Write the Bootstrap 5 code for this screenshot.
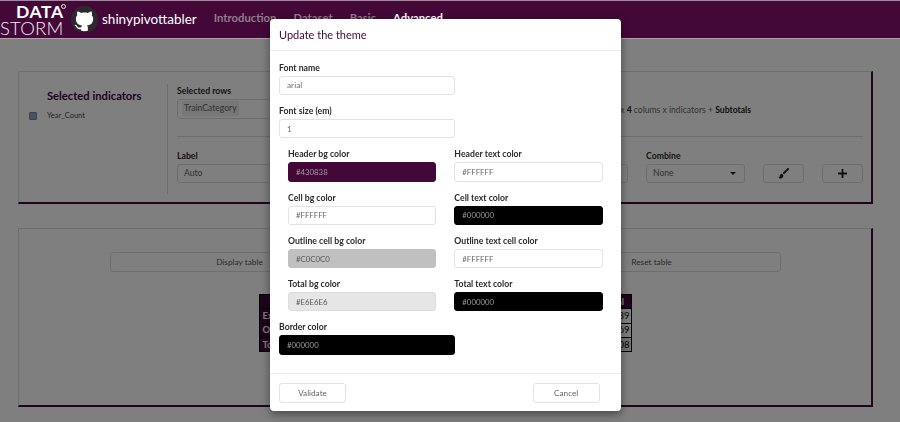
<!DOCTYPE html>
<html lang="en">
<head>
<meta charset="utf-8">
<title>shinypivottabler</title>
<link href="https://cdn.jsdelivr.net/npm/bootstrap@5.3.0/dist/css/bootstrap.min.css" rel="stylesheet">
<style>
html,body{height:422px;overflow:hidden}
body{font-family:Lato,"Open Sans",sans-serif;font-size:8.5px;color:#212529;background:#fff}
.topbar{height:39px;background:#430838;border-top:1px solid #9c8b99;border-bottom:1px solid #b49fb0;z-index:1052;padding:0}
.logo-box{width:68px;height:37px;color:#fff;line-height:1}
.logo-data{position:absolute;left:16px;top:4px;font-size:17.5px;line-height:14px;font-weight:700;letter-spacing:.6px;color:#fff}
.logo-storm{position:absolute;left:0;top:20px;font-size:18.5px;line-height:14px;font-weight:300;letter-spacing:.2px;color:#f2eef1}
.logo-ring{position:absolute;left:61px;top:3px;width:5px;height:5px;border:1px solid #e6dde4;border-radius:50%}
.gh-mark{margin-left:3px}
.brand-name{font-size:13.5px;color:#fff;margin-left:4px;line-height:1}
.top-links{margin-left:17px;gap:17px;font-size:11.3px;font-weight:700;color:#8f7d8b;margin-top:-2px}
.top-links a{color:inherit;text-decoration:none}
.top-links a.on{color:#fff}
.sheet{padding:32px 27px 0 18px}
.pane{background:#fff;border:1px solid #dcdcdc;border-right:2px solid #430838;border-bottom:2px solid #430838}
.pane-a{height:133px;margin-bottom:24px}
.pane-b{height:179px}
.ind-col{width:149px;height:110px;margin-top:12px;border-right:1px solid #d8d8d8;padding:5px 0 0 10px}
.ind-title{font-size:11.2px;font-weight:700;color:#430838;margin:0 0 6px 18px;line-height:14px}
.ind-check{width:8px;height:8px;background:#90a4c0;border:1px solid #6f88ab;border-radius:1px;display:inline-block;margin-right:10px;position:relative;top:.5px}
.ind-row{font-size:7.5px;color:#444;display:flex;align-items:center;margin-top:7px}
.opt-col{margin-left:9px;width:686px;margin-top:11px}
.fld-label{font-size:8.7px;font-weight:700;line-height:16px;display:block;margin-bottom:0;color:#2b2b2b}
.fake-in{height:19.5px;border:1px solid #ddd;border-radius:3px;padding:0 6px;display:flex;align-items:center;color:#666;background:#fff;font-size:8.6px}
.chip{background:#eee;border-radius:2px;padding:1px 2px;color:#666;margin-left:-2px}
.sum-text{font-size:8.6px;color:#666;padding-top:21px;margin-left:auto;margin-right:112px;white-space:nowrap}
.sum-text b{color:#222}
.divider{border-top:1px solid #ddd;margin:17px 0 11px}
.caret{width:0;height:0;border-left:3.5px solid transparent;border-right:3.5px solid transparent;border-top:3.5px solid #222;margin-left:auto;margin-right:2px}
.tool-btn{width:41px;height:19.5px;padding:0;border:1px solid #ddd;border-radius:3px;background:#fff;margin-top:16px;display:flex;align-items:center;justify-content:center;--bs-btn-hover-bg:#fff}
.act-row{padding:23px 90px 0 91px}
.act-btn{width:259px;height:20px;padding:0;font-size:8.3px;color:#555;background:#fff;border:1px solid #ddd;border-radius:3px}
.pivot{width:373px;margin:22px auto 0;border-collapse:collapse;font-size:9.5px;table-layout:fixed}
.pivot th,.pivot td{border:1px solid #000;height:14.3px;padding:0 1px;line-height:1;color:#000;background:#fff;white-space:nowrap}
.pivot .hd{background:#430838;color:#fff;font-weight:700;padding:0 3px}
.pivot td{text-align:right}
.pivot tr.sumrow td{background:#e6e6e6}
.theme-dialog{width:350.7px;max-width:none;margin:18.5px 0 0 270px}
.theme-box{border:0;border-radius:4px;height:392px;box-shadow:0 3px 10px rgba(0,0,0,.45);font-size:8.7px}
.theme-head{height:32.5px;padding:1px 9px 0;border-bottom:1px solid #eee;display:flex;align-items:center}
.theme-title{font-size:11px;font-weight:400;color:#430838;margin:0;line-height:1}
.theme-body{padding:8.7px 9px 10.7px;height:322px}
.theme-foot{height:37px;border-top:1px solid #eee;padding:9px 21px 0 9px;display:flex;justify-content:space-between;align-items:flex-start}
.half{width:175.5px}
.fieldset{margin-bottom:7.9px}
.fieldset .form-control{height:19.4px;min-height:0;padding:0 7px;font-size:8.3px;border:1px solid #e3e3e3;border-radius:3px;color:#6e6e6e;line-height:1}
.color-grid{--bs-gutter-x:18px;margin-left:0;margin-right:0}
.color-grid>div{padding-left:9px;padding-right:9px}
.fieldset .form-control.hexv{font-size:7.8px}
.form-control.sw-purple{background:#430838;color:#a997a5;border-color:#430838}
.form-control.sw-black{background:#000;color:#9a9a9a;border-color:#000}
.form-control.sw-silver{background:#c0c0c0;color:#555;border-color:#c0c0c0}
.form-control.sw-pale{background:#e6e6e6;color:#555;border-color:#ddd}
.form-control.sw-white{background:#fff;color:#666}
.foot-btn{width:67px;height:20px;padding:0;font-size:8.2px;color:#666;background:#fff;border:1px solid #e3e3e3;border-radius:3px}
</style>
</head>
<body>
<nav class="navbar topbar position-relative flex-nowrap justify-content-start align-items-center">
  <div class="logo-box position-relative flex-shrink-0">
    <span class="logo-data">DATA</span><span class="logo-storm">STORM</span><i class="logo-ring"></i>
  </div>
  <svg class="gh-mark flex-shrink-0" width="27" height="27" viewBox="0 0 16 16" role="img" aria-label="GitHub"><circle cx="8" cy="8" r="7" fill="#fff"/><path fill="#2c2a2c" d="M8 0C3.58 0 0 3.58 0 8c0 3.54 2.29 6.53 5.47 7.59.4.07.55-.17.55-.38 0-.19-.01-.82-.01-1.49-2.01.37-2.53-.49-2.69-.94-.09-.23-.48-.94-.82-1.13-.28-.15-.68-.52-.01-.53.63-.01 1.08.58 1.23.82.72 1.21 1.87.87 2.33.66.07-.52.28-.87.51-1.07-1.78-.2-3.64-.89-3.64-3.95 0-.87.31-1.59.82-2.15-.08-.2-.36-1.02.08-2.12 0 0 .67-.21 2.2.82.64-.18 1.32-.27 2-.27.68 0 1.36.09 2 .27 1.53-1.04 2.2-.82 2.2-.82.44 1.1.16 1.92.08 2.12.51.56.82 1.27.82 2.15 0 3.07-1.87 3.75-3.65 3.95.29.25.54.73.54 1.48 0 1.07-.01 1.93-.01 2.2 0 .21.15.46.55.38A8.013 8.013 0 0016 8c0-4.42-3.58-8-8-8z"/></svg>
  <span class="brand-name">shinypivottabler</span>
  <div class="top-links d-flex">
    <a href="#">Introduction</a><a href="#">Dataset</a><a href="#">Basic</a><a href="#" class="on">Advanced</a>
  </div>
</nav>

<main class="sheet">
  <section class="pane pane-a d-flex">
    <div class="ind-col flex-shrink-0">
      <p class="ind-title">Selected indicators</p>
      <div class="ind-row"><i class="ind-check"></i>Year_Count</div>
    </div>
    <div class="opt-col">
      <div class="d-flex">
        <div style="width:215px">
          <span class="fld-label">Selected rows</span>
          <div class="fake-in"><span class="chip">TrainCategory</span></div>
        </div>
        <div class="sum-text">x <b>4</b> colums x indicators + <b>Subtotals</b></div>
      </div>
      <div class="divider"></div>
      <div class="d-flex" style="gap:18px">
        <div style="width:218px"><span class="fld-label">Label</span><div class="fake-in">Auto</div></div>
        <div style="width:215px"><span class="fld-label">&nbsp;</span><div class="fake-in"></div></div>
        <div style="width:99px"><span class="fld-label">Combine</span><div class="fake-in">None<i class="caret"></i></div></div>
        <button type="button" class="btn tool-btn" aria-label="Edit theme"><svg width="11" height="11" viewBox="0 0 16 16"><path fill="#222" d="M15.6.4c-.5-.5-1.3-.5-2 0L6.8 7.2l2 2 6.8-6.8c.5-.7.5-1.5 0-2zM5.6 8.3C3.6 8.3 2.8 10 2.6 11.6 2.4 13 1.6 13.8.4 14.2c1.6 1.4 4.2 1.6 6-.1 1.4-1.3 1.6-3 1.1-4.2z"/></svg></button>
        <button type="button" class="btn tool-btn" aria-label="Add"><svg width="9" height="9" viewBox="0 0 10 10"><path fill="#222" d="M4 0h2v4h4v2H6v4H4V6H0V4h4z"/></svg></button>
      </div>
    </div>
  </section>

  <section class="pane pane-b">
    <div class="d-flex justify-content-between act-row">
      <button type="button" class="btn act-btn">Display table</button>
      <button type="button" class="btn act-btn">Reset table</button>
    </div>
    <table class="pivot">
      <colgroup><col style="width:72px"><col><col style="width:31px"></colgroup>
      <tr><th class="hd"></th><th class="hd"></th><th class="hd">Total</th></tr>
      <tr><th class="hd">Exp</th><td></td><td>39</td></tr>
      <tr><th class="hd">Ord</th><td></td><td>69</td></tr>
      <tr class="sumrow"><th class="hd">Tot</th><td></td><td>08</td></tr>
    </table>
  </section>
</main>

<div class="modal-backdrop fade show"></div>
<div class="modal fade show d-block" tabindex="-1" role="dialog" aria-modal="true">
  <div class="modal-dialog theme-dialog">
    <div class="modal-content theme-box">
      <div class="theme-head"><h4 class="theme-title">Update the theme</h4></div>
      <div class="theme-body">
        <div class="fieldset half"><label class="fld-label">Font name</label><input class="form-control" value="arial"></div>
        <div class="fieldset half"><label class="fld-label">Font size (em)</label><input class="form-control" value="1"></div>
        <div class="row color-grid">
          <div class="col-6 fieldset"><label class="fld-label">Header bg color</label><input class="form-control hexv sw-purple" value="#430838"></div>
          <div class="col-6 fieldset"><label class="fld-label">Header text color</label><input class="form-control hexv sw-white" value="#FFFFFF"></div>
          <div class="col-6 fieldset"><label class="fld-label">Cell bg color</label><input class="form-control hexv sw-white" value="#FFFFFF"></div>
          <div class="col-6 fieldset"><label class="fld-label">Cell text color</label><input class="form-control hexv sw-black" value="#000000"></div>
          <div class="col-6 fieldset"><label class="fld-label">Outline cell bg color</label><input class="form-control hexv sw-silver" value="#C0C0C0"></div>
          <div class="col-6 fieldset"><label class="fld-label">Outline text cell color</label><input class="form-control hexv sw-white" value="#FFFFFF"></div>
          <div class="col-6 fieldset"><label class="fld-label">Total bg color</label><input class="form-control hexv sw-pale" value="#E6E6E6"></div>
          <div class="col-6 fieldset"><label class="fld-label">Total text color</label><input class="form-control hexv sw-black" value="#000000"></div>
        </div>
        <div class="fieldset half"><label class="fld-label">Border color</label><input class="form-control hexv sw-black" value="#000000"></div>
      </div>
      <div class="theme-foot">
        <button type="button" class="btn foot-btn">Validate</button>
        <button type="button" class="btn foot-btn">Cancel</button>
      </div>
    </div>
  </div>
</div>
<script src="https://cdn.jsdelivr.net/npm/bootstrap@5.3.0/dist/js/bootstrap.bundle.min.js"></script>
</body>
</html>
